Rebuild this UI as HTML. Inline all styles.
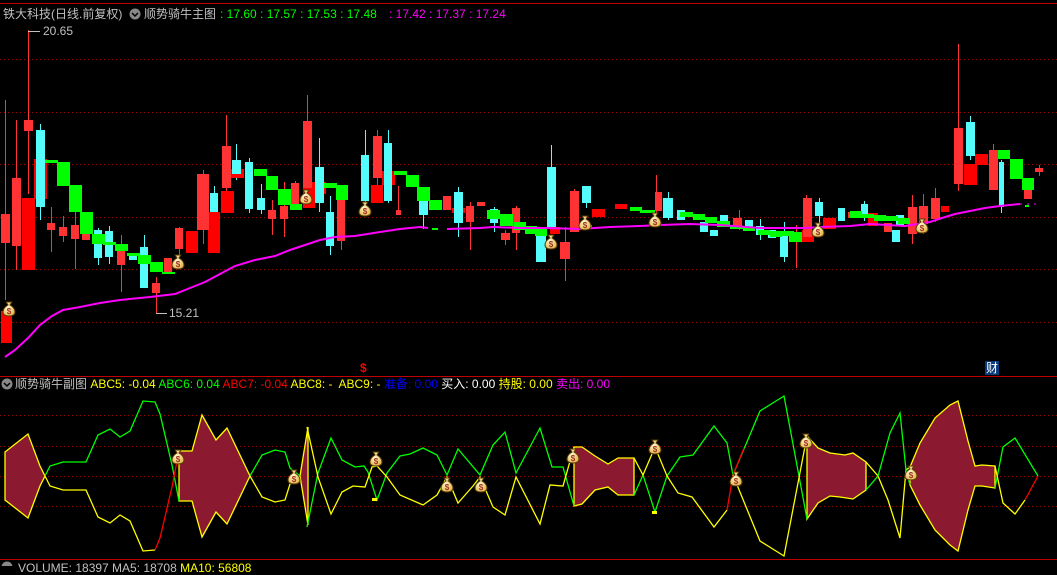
<!DOCTYPE html>
<html><head><meta charset="utf-8"><style>
html,body{margin:0;padding:0;background:#000;width:1057px;height:566px;overflow:hidden;font-family:"Liberation Sans","Noto Sans CJK SC",sans-serif;}
.t{position:absolute;font-size:12px;line-height:14px;white-space:nowrap;}
svg{position:absolute;left:0;top:0;}
</style></head><body>
<svg width="1057" height="566" viewBox="0 0 1057 566">
<defs>
<radialGradient id="bg" cx="0.4" cy="0.4" r="0.7"><stop offset="0" stop-color="#fff8d0"/><stop offset="1" stop-color="#e0b040"/></radialGradient>
</defs>
<g stroke="#a00000" stroke-width="1" stroke-dasharray="1,3">
<line x1="0" y1="59.5" x2="1057" y2="59.5"/><line x1="0" y1="112.5" x2="1057" y2="112.5"/><line x1="0" y1="164.5" x2="1057" y2="164.5"/><line x1="0" y1="217.5" x2="1057" y2="217.5"/><line x1="0" y1="269.5" x2="1057" y2="269.5"/><line x1="0" y1="322.5" x2="1057" y2="322.5"/>
<line x1="0" y1="415.5" x2="1057" y2="415.5"/><line x1="0" y1="446.5" x2="1057" y2="446.5"/><line x1="0" y1="476.5" x2="1057" y2="476.5"/><line x1="0" y1="506.5" x2="1057" y2="506.5"/>
</g>
<line x1="0" y1="3.5" x2="1057" y2="3.5" stroke="#c00000"/>
<line x1="0" y1="376.5" x2="1057" y2="376.5" stroke="#c00000"/>
<line x1="0" y1="559.5" x2="1057" y2="559.5" stroke="#c00000"/>
<!-- wicks -->
<g stroke-width="1">
<g stroke="#ff3333">
<line x1="5.5" y1="100" x2="5.5" y2="300"/><line x1="16.5" y1="120" x2="16.5" y2="270"/><line x1="28.5" y1="30" x2="28.5" y2="194"/>
<line x1="51.5" y1="207" x2="51.5" y2="252"/><line x1="63.5" y1="216" x2="63.5" y2="242"/><line x1="75.5" y1="212" x2="75.5" y2="269"/>
<line x1="121.5" y1="235" x2="121.5" y2="292"/><line x1="156.5" y1="277" x2="156.5" y2="313"/><line x1="179.5" y1="227" x2="179.5" y2="256"/>
<line x1="203.5" y1="170" x2="203.5" y2="244"/><line x1="226.5" y1="115" x2="226.5" y2="205"/><line x1="272.5" y1="200" x2="272.5" y2="235"/>
<line x1="284.5" y1="182" x2="284.5" y2="237"/><line x1="295.5" y1="181" x2="295.5" y2="209"/><line x1="307.5" y1="95" x2="307.5" y2="195"/>
<line x1="341.5" y1="210" x2="341.5" y2="250"/><line x1="377.5" y1="130" x2="377.5" y2="185"/><line x1="398.5" y1="186" x2="398.5" y2="215"/>
<line x1="470.5" y1="202" x2="470.5" y2="250"/><line x1="505.5" y1="230" x2="505.5" y2="245"/><line x1="516.5" y1="206" x2="516.5" y2="250"/>
<line x1="565.5" y1="227" x2="565.5" y2="281"/><line x1="574.5" y1="189" x2="574.5" y2="232"/><line x1="656.5" y1="175" x2="656.5" y2="215"/>
<line x1="739.5" y1="210" x2="739.5" y2="230"/><line x1="806.5" y1="195" x2="806.5" y2="240"/><line x1="796.5" y1="225" x2="796.5" y2="268"/>
<line x1="912.5" y1="195" x2="912.5" y2="244"/><line x1="923.5" y1="194" x2="923.5" y2="234"/><line x1="935.5" y1="188" x2="935.5" y2="222"/>
<line x1="958.5" y1="44" x2="958.5" y2="191"/><line x1="993.5" y1="144" x2="993.5" y2="190"/><line x1="1039.5" y1="165" x2="1039.5" y2="176"/>
</g>
<g stroke="#54fcfc">
<line x1="40.5" y1="124" x2="40.5" y2="220"/><line x1="98.5" y1="228" x2="98.5" y2="265"/><line x1="109.5" y1="226" x2="109.5" y2="264"/>
<line x1="144.5" y1="235" x2="144.5" y2="288"/><line x1="214.5" y1="186" x2="214.5" y2="215"/><line x1="236.5" y1="144" x2="236.5" y2="180"/>
<line x1="249.5" y1="158" x2="249.5" y2="213"/><line x1="261.5" y1="184" x2="261.5" y2="214"/><line x1="319.5" y1="138" x2="319.5" y2="212"/>
<line x1="330.5" y1="196" x2="330.5" y2="255"/><line x1="365.5" y1="130" x2="365.5" y2="203"/><line x1="388.5" y1="130" x2="388.5" y2="203"/>
<line x1="423.5" y1="192" x2="423.5" y2="229"/><line x1="458.5" y1="187" x2="458.5" y2="237"/><line x1="494.5" y1="207" x2="494.5" y2="232"/>
<line x1="541.5" y1="227" x2="541.5" y2="262"/><line x1="551.5" y1="145" x2="551.5" y2="227"/><line x1="586.5" y1="186" x2="586.5" y2="208"/>
<line x1="668.5" y1="192" x2="668.5" y2="220"/><line x1="760.5" y1="219" x2="760.5" y2="240"/><line x1="784.5" y1="222" x2="784.5" y2="262"/>
<line x1="819.5" y1="198" x2="819.5" y2="223"/><line x1="864.5" y1="201" x2="864.5" y2="221"/><line x1="970.5" y1="116" x2="970.5" y2="160"/>
<line x1="1001.5" y1="160" x2="1001.5" y2="213"/>
</g>
</g>
<!-- bodies -->
<g fill="#ff0000">
<rect x="1" y="311" width="11" height="32"/><rect x="22" y="198" width="13" height="72"/><rect x="34" y="159" width="13" height="40"/>
<rect x="186" y="231" width="12" height="22"/><rect x="208" y="212" width="12" height="41"/><rect x="221" y="191" width="13" height="22"/>
<rect x="231" y="169" width="13" height="9"/><rect x="303" y="182" width="12" height="26"/><rect x="313" y="182" width="13" height="12"/>
<rect x="371" y="185" width="12" height="18"/><rect x="382" y="171" width="13" height="14"/><rect x="452" y="208" width="13" height="5"/>
<rect x="550" y="227" width="10" height="7"/><rect x="592" y="209" width="13" height="8"/><rect x="615" y="204" width="12" height="5"/>
<rect x="823" y="218" width="13" height="11"/><rect x="868" y="213" width="10" height="13"/><rect x="964" y="164" width="13" height="21"/>
<rect x="975" y="154" width="13" height="11"/><rect x="941" y="206" width="8" height="6"/><rect x="802" y="230" width="12" height="12"/>
</g>
<g fill="#ff3333">
<rect x="1" y="214" width="9" height="29"/><rect x="12" y="178" width="9" height="68"/><rect x="24" y="120" width="9" height="11"/>
<rect x="47" y="223" width="8" height="7"/><rect x="59" y="227" width="8" height="9"/><rect x="71" y="225" width="8" height="14"/>
<rect x="82" y="230" width="8" height="10"/><rect x="117" y="250" width="8" height="15"/><rect x="152" y="283" width="8" height="10"/>
<rect x="164" y="258" width="8" height="15"/><rect x="175" y="228" width="8" height="21"/><rect x="197" y="174" width="12" height="56"/>
<rect x="222" y="146" width="9" height="42"/><rect x="268" y="210" width="8" height="9"/><rect x="280" y="206" width="8" height="13"/>
<rect x="291" y="183" width="8" height="22"/><rect x="303" y="121" width="9" height="67"/><rect x="337" y="200" width="8" height="41"/>
<rect x="373" y="136" width="9" height="42"/><rect x="396" y="210" width="5" height="5"/><rect x="443" y="196" width="8" height="14"/>
<rect x="466" y="206" width="8" height="16"/><rect x="477" y="202" width="8" height="4"/><rect x="501" y="233" width="9" height="7"/>
<rect x="512" y="208" width="8" height="25"/><rect x="560" y="242" width="10" height="17"/><rect x="570" y="191" width="9" height="41"/>
<rect x="655" y="192" width="7" height="19"/><rect x="733" y="218" width="9" height="10"/><rect x="803" y="198" width="9" height="39"/>
<rect x="848" y="212" width="8" height="6"/><rect x="908" y="207" width="9" height="27"/><rect x="919" y="206" width="9" height="18"/>
<rect x="931" y="198" width="9" height="21"/><rect x="954" y="128" width="9" height="56"/><rect x="989" y="150" width="9" height="40"/>
<rect x="1024" y="190" width="8" height="9"/><rect x="1035" y="168" width="8" height="4"/><rect x="884" y="223" width="8" height="9"/>
</g>
<g fill="#54fcfc">
<rect x="36" y="130" width="9" height="77"/><rect x="94" y="230" width="8" height="28"/><rect x="105" y="231" width="8" height="26"/>
<rect x="129" y="253" width="8" height="7"/><rect x="140" y="247" width="8" height="41"/><rect x="210" y="193" width="8" height="19"/>
<rect x="232" y="160" width="9" height="14"/><rect x="245" y="162" width="8" height="47"/><rect x="257" y="198" width="8" height="12"/>
<rect x="315" y="167" width="9" height="36"/><rect x="326" y="212" width="8" height="34"/><rect x="361" y="155" width="8" height="46"/>
<rect x="384" y="143" width="8" height="58"/><rect x="419" y="192" width="9" height="23"/><rect x="454" y="192" width="9" height="31"/>
<rect x="490" y="209" width="8" height="14"/><rect x="536" y="232" width="10" height="30"/><rect x="547" y="167" width="9" height="60"/>
<rect x="582" y="186" width="9" height="17"/><rect x="663" y="198" width="10" height="20"/><rect x="756" y="226" width="8" height="9"/>
<rect x="780" y="235" width="8" height="22"/><rect x="815" y="202" width="8" height="14"/><rect x="838" y="208" width="7" height="13"/>
<rect x="861" y="204" width="7" height="14"/><rect x="966" y="122" width="9" height="34"/><rect x="999" y="162" width="5" height="45"/>
<rect x="700" y="222" width="8" height="10"/><rect x="720" y="215" width="8" height="12"/><rect x="745" y="220" width="8" height="8"/><rect x="710" y="230" width="8" height="6"/>
<rect x="768" y="230" width="8" height="8"/><rect x="677" y="210" width="8" height="10"/><rect x="892" y="230" width="8" height="12"/><rect x="896" y="215" width="8" height="10"/>
</g>
<g fill="#00ff00">
<rect x="45" y="160" width="13" height="3"/><rect x="57" y="162" width="13" height="24"/><rect x="69" y="185" width="13" height="27"/>
<rect x="80" y="212" width="13" height="22"/><rect x="92" y="234" width="13" height="10"/><rect x="103" y="242" width="13" height="3"/>
<rect x="115" y="244" width="13" height="7"/><rect x="127" y="253" width="13" height="3"/><rect x="138" y="255" width="13" height="9"/>
<rect x="150" y="262" width="13" height="10"/><rect x="162" y="272" width="13" height="2"/>
<rect x="254" y="169" width="13" height="7"/><rect x="266" y="176" width="12" height="14"/><rect x="278" y="189" width="13" height="16"/>
<rect x="290" y="204" width="12" height="6"/><rect x="324" y="183" width="13" height="5"/><rect x="336" y="185" width="12" height="15"/>
<rect x="394" y="171" width="13" height="4"/><rect x="406" y="175" width="13" height="12"/><rect x="417" y="187" width="13" height="14"/>
<rect x="429" y="200" width="13" height="10"/><rect x="487" y="210" width="13" height="9"/><rect x="500" y="214" width="13" height="12"/>
<rect x="514" y="222" width="12" height="8"/><rect x="525" y="226" width="12" height="8"/><rect x="535" y="227" width="12" height="9"/>
<rect x="580" y="225" width="12" height="4"/><rect x="630" y="207" width="12" height="4"/><rect x="640" y="210" width="15" height="3"/>
<rect x="680" y="212" width="13" height="5"/><rect x="693" y="214" width="12" height="6"/><rect x="705" y="217" width="12" height="6"/>
<rect x="717" y="221" width="13" height="6"/><rect x="730" y="226" width="13" height="3"/><rect x="743" y="227" width="12" height="4"/>
<rect x="758" y="230" width="12" height="5"/><rect x="770" y="231" width="12" height="6"/><rect x="782" y="231" width="12" height="5"/>
<rect x="789" y="232" width="13" height="10"/><rect x="850" y="211" width="12" height="7"/><rect x="862" y="214" width="12" height="4"/>
<rect x="874" y="215" width="12" height="6"/><rect x="886" y="216" width="12" height="5"/><rect x="898" y="218" width="12" height="6"/>
<rect x="998" y="150" width="12" height="9"/><rect x="1010" y="159" width="13" height="20"/><rect x="1022" y="178" width="12" height="12"/>
<rect x="1025" y="205" width="4" height="2"/>
</g>
<!-- MA -->
<polyline fill="none" stroke="#ff00ff" stroke-width="2" points="5,357 15,350 28,338 40,325 52,316 63,310 80,307 100,303 120,300 150,297 175,294 190,288 205,282 220,274 235,266 255,260 275,256 290,250 305,245 320,240 335,237 355,236 380,232 400,229 420,227 428,228"/>
<polyline fill="none" stroke="#ff00ff" stroke-width="2" points="447,229 480,228 493,227 520,228 545,228 580,229 610,227 640,226 660,225 690,224 720,225 760,228 790,228 806,228 820,227 850,226 870,224 905,226 930,222 942,218 955,214 970,211 985,208 1000,206 1020,204"/>
<line x1="1020" y1="204" x2="1040" y2="204" stroke="#ff00ff" stroke-dasharray="2,5"/>
<line x1="432" y1="229" x2="438" y2="229" stroke="#00ff00" stroke-width="2"/>
<!-- price labels -->
<line x1="28" y1="31.5" x2="40" y2="31.5" stroke="#c0c0c0"/><line x1="156" y1="313.5" x2="167" y2="313.5" stroke="#c0c0c0"/>
<!-- sub panel fills -->
<g fill="#8b1a30" stroke="#ffff00" stroke-width="1.3">
<polygon points="5,452 28,434 40,466 45,476 40,486 28,518 5,500"/>
<polygon points="179,451 192,451 202,415 216,440 227,428 250,476 227,524 216,512 202,537 192,501 179,501"/>
<polygon points="300,476 308,427 308,525"/>
<polygon points="574,447 582,447 595,456 608,464 618,458 634,458 634,495 618,495 608,487 595,490 582,504 574,506"/>
<polygon points="807,436 818,448 830,453 845,455 853,453 866,462 866,490 853,499 840,497 830,496 818,503 807,519"/>
<polygon points="910,467 920,443 935,418 950,405 958,401 968,441 975,466 982,465 995,466 995,488 982,486 975,486 968,510 958,551 950,545 935,530 920,505 910,485"/>
</g>
<g fill="none" stroke-width="1.3">
<polyline stroke="#00ff00" points="45,476 50,466 63,462 86,462 98,435 110,429 120,437 130,431 143,401 155,402 160,414 172,465 179,501"/>
<polyline stroke="#ffff00" points="45,476 50,486 63,490 86,490 98,517 110,523 120,515 130,521 143,551 155,550"/>
<polyline stroke="#ff0000" points="155,550 160,538 172,487 179,451"/>
<polyline stroke="#00ff00" points="250,476 262,455 275,450 285,452 290,468 300,476"/>
<polyline stroke="#ffff00" points="250,476 262,497 275,502 285,500 290,484 300,476"/>
<polyline stroke="#00ff00" points="307,527 318,473 331,438 342,460 355,467 364,466 368,472 377,500 387,473 400,456 410,454 423,448 437,455 447,475 458,449 480,475 493,445 505,432 516,473 540,428 552,467 563,467 574,506"/>
<polyline stroke="#ffff00" points="307,427 318,477 331,514 342,492 353,486 365,487 372,467 377,466 387,477 400,495 423,505 437,495 447,477 458,503 473,486 480,477 493,507 505,515 516,477 540,524 550,485 563,486 574,447"/>
<polyline stroke="#00ff00" points="634,495 643,475 655,512 667,476 680,457 693,455 714,426 727,443 733,475 760,411 784,396 807,519"/>
<polyline stroke="#ffff00" points="634,458 643,475 655,447 667,476 678,493 692,497 714,527 727,510"/>
<polyline stroke="#ff0000" points="727,510 733,475 744,448"/>
<polyline stroke="#ffff00" points="733,475 760,541 784,556 807,436"/>
<polyline stroke="#ffff00" points="866,462 878,476 888,500 900,538 906,470 910,467"/>
<polyline stroke="#00ff00" points="866,490 878,476 890,433 900,413 906,470 910,485"/>
<polyline stroke="#00ff00" points="995,488 1003,447 1015,438 1038,476"/>
<polyline stroke="#ffff00" points="995,466 1003,503 1015,514 1025,500"/>
<polyline stroke="#ff0000" points="1025,500 1038,476"/>
</g>
<rect x="372" y="498" width="5" height="3" fill="#ffff00"/><rect x="652" y="511" width="5" height="3" fill="#ffff00"/>
<!-- money bags -->
<g stroke="#5a3a00" stroke-width="1">
<g transform="translate(9,309)"><path d="M-3,-7 L3,-7 L1,-4 Q6,-1 6,3 Q6,7 0,7 Q-6,7 -6,3 Q-6,-1 -1,-4 Z" fill="url(#bg)"/></g>
<g transform="translate(178,262)"><path d="M-3,-7 L3,-7 L1,-4 Q6,-1 6,3 Q6,7 0,7 Q-6,7 -6,3 Q-6,-1 -1,-4 Z" fill="url(#bg)"/></g>
<g transform="translate(306,197)"><path d="M-3,-7 L3,-7 L1,-4 Q6,-1 6,3 Q6,7 0,7 Q-6,7 -6,3 Q-6,-1 -1,-4 Z" fill="url(#bg)"/></g>
<g transform="translate(365,209)"><path d="M-3,-7 L3,-7 L1,-4 Q6,-1 6,3 Q6,7 0,7 Q-6,7 -6,3 Q-6,-1 -1,-4 Z" fill="url(#bg)"/></g>
<g transform="translate(551,242)"><path d="M-3,-7 L3,-7 L1,-4 Q6,-1 6,3 Q6,7 0,7 Q-6,7 -6,3 Q-6,-1 -1,-4 Z" fill="url(#bg)"/></g>
<g transform="translate(585,223)"><path d="M-3,-7 L3,-7 L1,-4 Q6,-1 6,3 Q6,7 0,7 Q-6,7 -6,3 Q-6,-1 -1,-4 Z" fill="url(#bg)"/></g>
<g transform="translate(655,220)"><path d="M-3,-7 L3,-7 L1,-4 Q6,-1 6,3 Q6,7 0,7 Q-6,7 -6,3 Q-6,-1 -1,-4 Z" fill="url(#bg)"/></g>
<g transform="translate(818,230)"><path d="M-3,-7 L3,-7 L1,-4 Q6,-1 6,3 Q6,7 0,7 Q-6,7 -6,3 Q-6,-1 -1,-4 Z" fill="url(#bg)"/></g>
<g transform="translate(922,226)"><path d="M-3,-7 L3,-7 L1,-4 Q6,-1 6,3 Q6,7 0,7 Q-6,7 -6,3 Q-6,-1 -1,-4 Z" fill="url(#bg)"/></g>
<g transform="translate(178,457)"><path d="M-3,-7 L3,-7 L1,-4 Q6,-1 6,3 Q6,7 0,7 Q-6,7 -6,3 Q-6,-1 -1,-4 Z" fill="url(#bg)"/></g>
<g transform="translate(294,477)"><path d="M-3,-7 L3,-7 L1,-4 Q6,-1 6,3 Q6,7 0,7 Q-6,7 -6,3 Q-6,-1 -1,-4 Z" fill="url(#bg)"/></g>
<g transform="translate(376,459)"><path d="M-3,-7 L3,-7 L1,-4 Q6,-1 6,3 Q6,7 0,7 Q-6,7 -6,3 Q-6,-1 -1,-4 Z" fill="url(#bg)"/></g>
<g transform="translate(447,485)"><path d="M-3,-7 L3,-7 L1,-4 Q6,-1 6,3 Q6,7 0,7 Q-6,7 -6,3 Q-6,-1 -1,-4 Z" fill="url(#bg)"/></g>
<g transform="translate(481,485)"><path d="M-3,-7 L3,-7 L1,-4 Q6,-1 6,3 Q6,7 0,7 Q-6,7 -6,3 Q-6,-1 -1,-4 Z" fill="url(#bg)"/></g>
<g transform="translate(573,456)"><path d="M-3,-7 L3,-7 L1,-4 Q6,-1 6,3 Q6,7 0,7 Q-6,7 -6,3 Q-6,-1 -1,-4 Z" fill="url(#bg)"/></g>
<g transform="translate(655,447)"><path d="M-3,-7 L3,-7 L1,-4 Q6,-1 6,3 Q6,7 0,7 Q-6,7 -6,3 Q-6,-1 -1,-4 Z" fill="url(#bg)"/></g>
<g transform="translate(736,479)"><path d="M-3,-7 L3,-7 L1,-4 Q6,-1 6,3 Q6,7 0,7 Q-6,7 -6,3 Q-6,-1 -1,-4 Z" fill="url(#bg)"/></g>
<g transform="translate(806,441)"><path d="M-3,-7 L3,-7 L1,-4 Q6,-1 6,3 Q6,7 0,7 Q-6,7 -6,3 Q-6,-1 -1,-4 Z" fill="url(#bg)"/></g>
<g transform="translate(911,473)"><path d="M-3,-7 L3,-7 L1,-4 Q6,-1 6,3 Q6,7 0,7 Q-6,7 -6,3 Q-6,-1 -1,-4 Z" fill="url(#bg)"/></g>
</g>
<g fill="#a03020" font-size="8" font-weight="bold" font-family="Liberation Sans,sans-serif" text-anchor="middle">
<text x="9" y="314">$</text><text x="178" y="267">$</text><text x="306" y="202">$</text><text x="365" y="214">$</text><text x="551" y="247">$</text><text x="585" y="228">$</text><text x="655" y="225">$</text><text x="818" y="235">$</text><text x="922" y="231">$</text>
<text x="178" y="462">$</text><text x="294" y="482">$</text><text x="376" y="464">$</text><text x="447" y="490">$</text><text x="481" y="490">$</text><text x="573" y="461">$</text><text x="655" y="452">$</text><text x="736" y="484">$</text><text x="806" y="446">$</text><text x="911" y="478">$</text>
</g>
<circle cx="135" cy="14" r="5.5" fill="#888"/><path d="M132,13 L135,16 L138,13" stroke="#000" stroke-width="1.5" fill="none"/>
<circle cx="7" cy="384" r="5.5" fill="#888"/><path d="M4,383 L7,386 L10,383" stroke="#000" stroke-width="1.5" fill="none"/>
<circle cx="7" cy="567" r="5.5" fill="#888"/>
<rect x="985" y="361" width="14" height="14" fill="#0a3a7a"/>
</svg>
<div class="t" style="left:3px;top:7px;color:#c0c0c0">铁大科技(日线.前复权)</div>
<div class="t" style="left:144px;top:7px;color:#c0c0c0">顺势骑牛主图</div>
<div class="t" style="left:220px;top:7px;color:#00ff00">: 17.60 : 17.57 : 17.53 : 17.48</div>
<div class="t" style="left:389px;top:7px;color:#ff00ff">: 17.42 : 17.37 : 17.24</div>
<div class="t" style="left:43px;top:24px;color:#c0c0c0">20.65</div>
<div class="t" style="left:169px;top:306px;color:#c0c0c0">15.21</div>
<div class="t" style="left:360px;top:361px;color:#ff0000;font-weight:bold">$</div>
<div class="t" style="left:986px;top:361px;color:#fff">财</div>
<div class="t" style="left:15px;top:377px;color:#c0c0c0">顺势骑牛副图 <span style="color:#ffff00">ABC5: -0.04</span> <span style="color:#00ff00">ABC6: 0.04</span> <span style="color:#ff0000">ABC7: -0.04</span> <span style="color:#ffff00">ABC8: -&nbsp; ABC9: -</span> <span style="color:#0000ff">准备: 0.00</span> <span style="color:#fff">买入: 0.00</span> <span style="color:#ffff00">持股: 0.00</span> <span style="color:#ff00ff">卖出: 0.00</span></div>
<div class="t" style="left:18px;top:561px;color:#c0c0c0">VOLUME: 18397 MA5: 18708 <span style="color:#ffff00">MA10: 56808</span></div>
</body></html>
